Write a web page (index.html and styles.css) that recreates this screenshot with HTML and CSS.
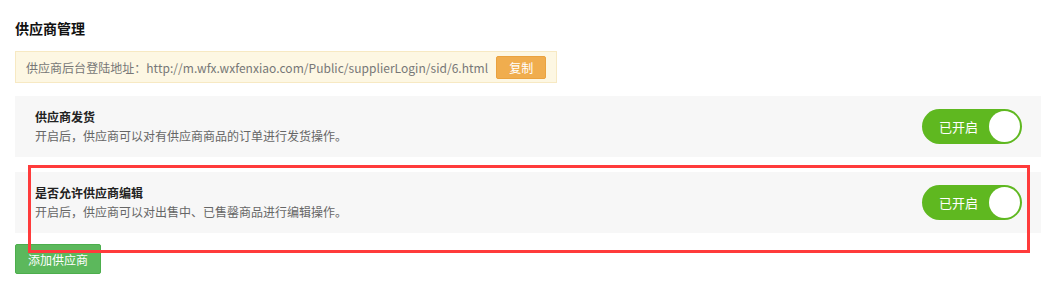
FILE: index.html
```html
<!DOCTYPE html>
<html>
<head>
  <title>供应商管理</title>
  <link rel="stylesheet" href="styles.css">
</head>
<body>
  <div class="page">
    <h3 class="page-title">供应商管理</h3>

    <div class="notice">
      <span class="notice-text">供应商后台登陆地址：http://m.wfx.wxfenxiao.com/Public/supplierLogin/sid/6.html</span>
      <button class="btn-copy">复制</button>
    </div>

    <div class="setting-row">
      <div class="setting-info">
        <div class="setting-name">供应商发货</div>
        <div class="setting-desc">开启后，供应商可以对有供应商商品的订单进行发货操作。</div>
      </div>
      <div class="switch on">
        <span class="switch-label">已开启</span>
        <span class="switch-knob"></span>
      </div>
    </div>

    <div class="setting-row">
      <div class="setting-info">
        <div class="setting-name">是否允许供应商编辑</div>
        <div class="setting-desc">开启后，供应商可以对出售中、已售罄商品进行编辑操作。</div>
      </div>
      <div class="switch on">
        <span class="switch-label">已开启</span>
        <span class="switch-knob"></span>
      </div>
    </div>

    <button class="btn-add">添加供应商</button>

    <div class="highlight-box"></div>
  </div>
</body>
</html>
```

FILE: styles.css
```css
body {
  margin: 0;
  background: #fff;
  font-family: "Noto Sans CJK SC", "Liberation Sans", sans-serif;
  color: #333;
}

.page {
  position: relative;
  padding: 18px 0 0 15px;
}

.page-title {
  margin: 0 0 13px;
  font-size: 14px;
  line-height: 20px;
  font-weight: bold;
  color: #111;
}

.notice {
  display: inline-flex;
  align-items: center;
  gap: 8px;
  height: 30px;
  padding: 0 10px;
  background: #fdf7e3;
  border: 1px solid #f7e9c3;
  font-size: 12px;
  color: #777;
}

.notice-text {
  letter-spacing: 0.03px;
}

.btn-copy {
  height: 23px;
  width: 50px;
  padding: 0;
  border: 1px solid #eaa23f;
  border-radius: 2px;
  background: #f0ad4e;
  color: #fff;
  font-family: inherit;
  font-size: 12px;
  cursor: pointer;
}

.setting-row {
  display: flex;
  align-items: center;
  justify-content: space-between;
  height: 61px;
  margin-top: 13px;
  padding: 0 19px 0 20px;
  background: #f7f7f7;
}

.setting-row + .setting-row {
  margin-top: 15px;
}

.setting-name {
  font-size: 12px;
  font-weight: bold;
  color: #222;
  line-height: 18px;
}

.setting-desc {
  font-size: 12px;
  color: #666;
  line-height: 18px;
  margin-top: 1px;
}

.switch {
  display: flex;
  align-items: center;
  justify-content: space-between;
  box-sizing: border-box;
  width: 100px;
  height: 35px;
  padding: 0 2px 0 17px;
  border-radius: 18px;
  background: #5fb820;
}

.switch-label {
  color: #fff;
  font-size: 13px;
}

.switch-knob {
  width: 31px;
  height: 31px;
  border-radius: 50%;
  background: #fff;
}

.btn-add {
  display: block;
  margin-top: 11px;
  height: 30px;
  width: 86px;
  padding: 0;
  border: 1px solid #4cae4c;
  border-radius: 2px;
  background: #5cb85c;
  color: #fff;
  font-family: inherit;
  font-size: 12px;
  cursor: pointer;
}

.highlight-box {
  position: absolute;
  left: 28px;
  top: 165px;
  width: 996px;
  height: 82px;
  border: 3px solid #ff3b3b;
  pointer-events: none;
}
```
